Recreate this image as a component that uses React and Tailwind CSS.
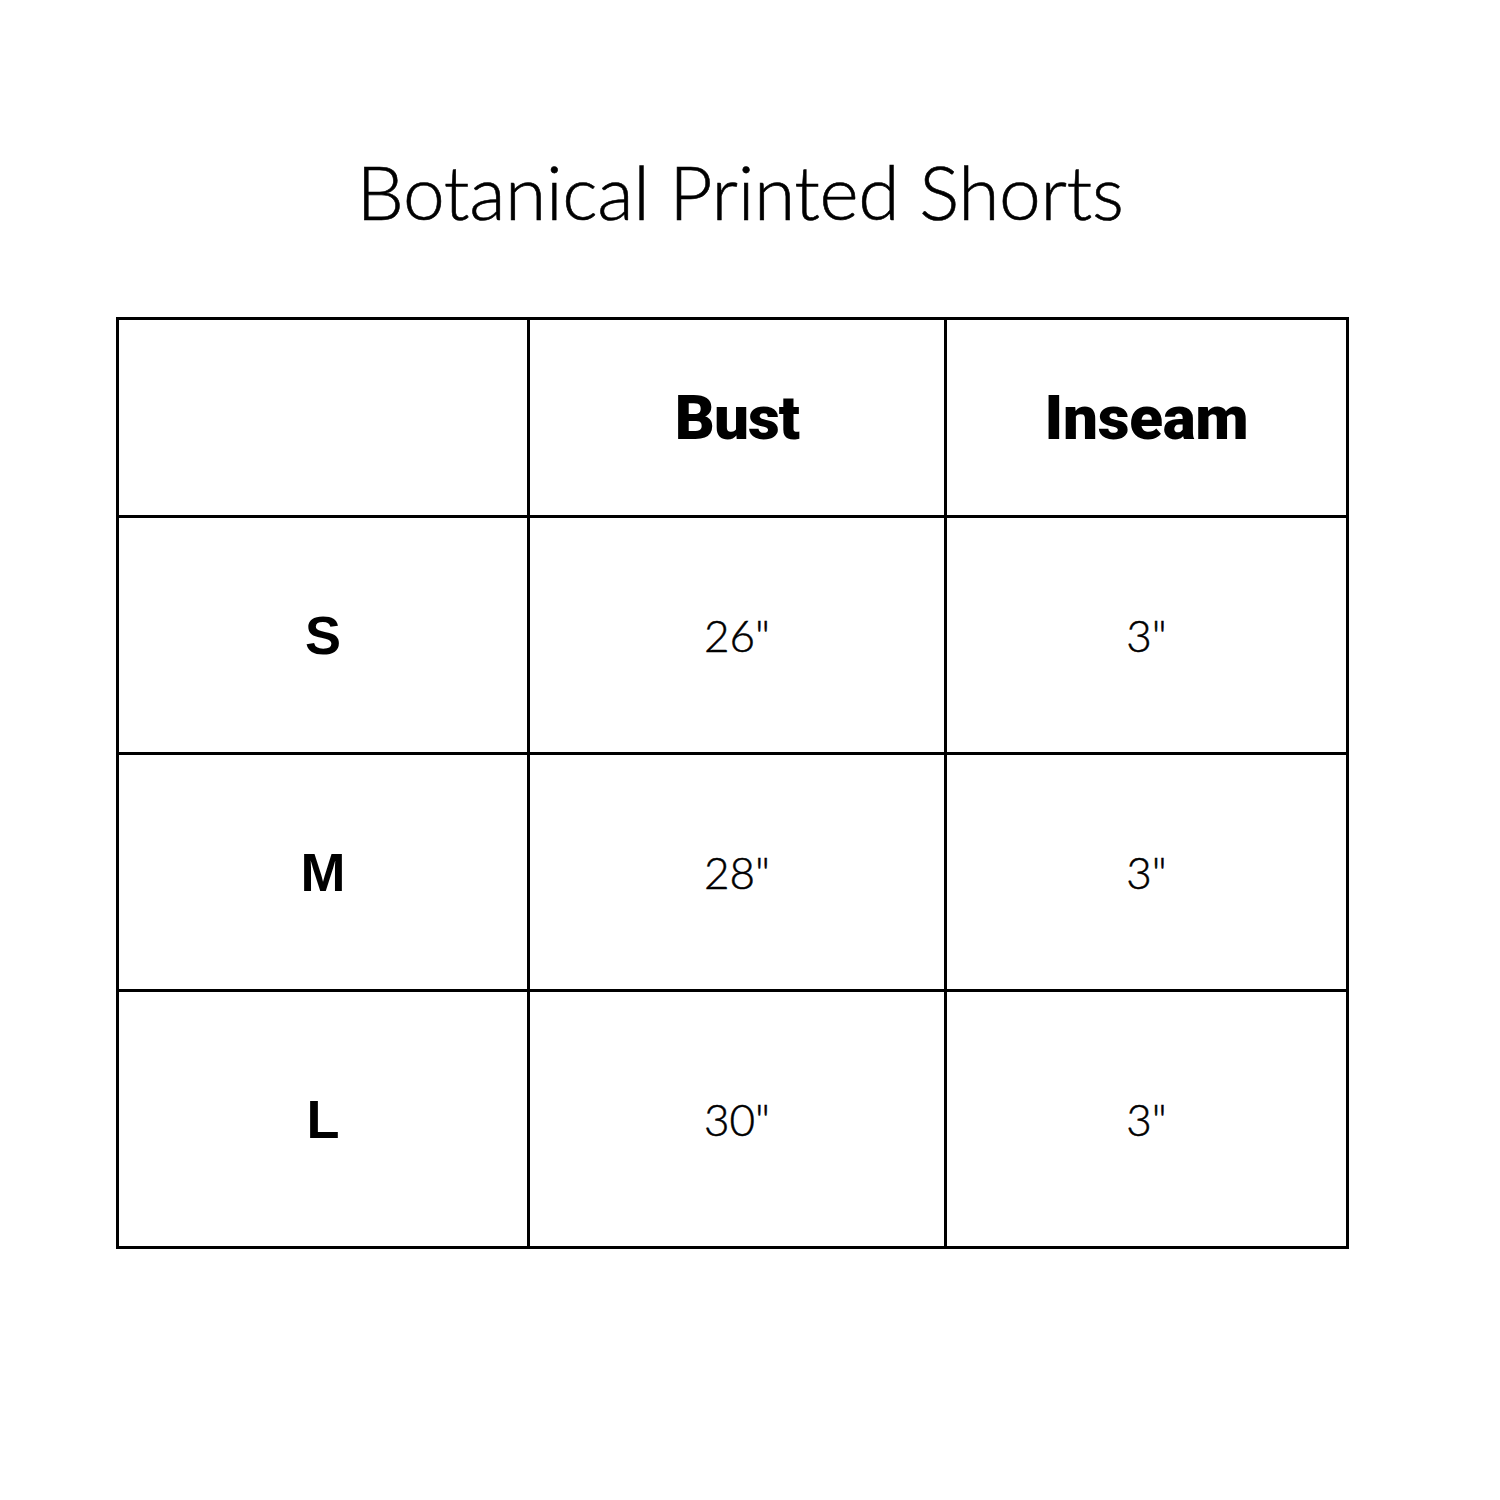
const rows = [
  { size: 'S', bust: '26"', inseam: '3"', h: 'h-[234px]' },
  { size: 'M', bust: '28"', inseam: '3"', h: 'h-[234px]' },
  { size: 'L', bust: '30"', inseam: '3"', h: 'h-[254px]' },
];

export default function App() {
  return (
    <main className="min-h-[1500px] w-[1500px] bg-white pt-[146px]">
      <h1 className="flex justify-center pr-[20px] font-['Lato',sans-serif] text-[75px] font-light leading-[90px] tracking-[-0.005em] text-black [-webkit-text-stroke:0.6px_black]">
        Botanical Printed Shorts
      </h1>

      <div className="ml-[116px] mt-[81px] grid w-[1233px] grid-cols-[408px_414px_399px] gap-[3px] bg-black p-[3px]">
        <div className="h-[195px] bg-white" />
        <div className="flex h-[195px] items-center justify-center bg-white font-['Roboto',sans-serif] text-[62px] font-black tracking-[-0.015em] text-black">
          Bust
        </div>
        <div className="flex h-[195px] items-center justify-center bg-white font-['Roboto',sans-serif] text-[62px] font-black tracking-[-0.005em] text-black">
          Inseam
        </div>

        {rows.map((row) => (
          <div key={row.size} className="contents">
            <div className={`flex ${row.h} items-center justify-center bg-white font-['Liberation_Sans',sans-serif] text-[54px] font-bold text-black`}>
              {row.size}
            </div>
            <div className={`flex ${row.h} items-center justify-center bg-white font-['Lato',sans-serif] text-[44px] font-light text-black [-webkit-text-stroke:0.5px_black]`}>
              {row.bust}
            </div>
            <div className={`flex ${row.h} items-center justify-center bg-white font-['Lato',sans-serif] text-[44px] font-light text-black [-webkit-text-stroke:0.5px_black]`}>
              {row.inseam}
            </div>
          </div>
        ))}
      </div>
    </main>
  );
}
